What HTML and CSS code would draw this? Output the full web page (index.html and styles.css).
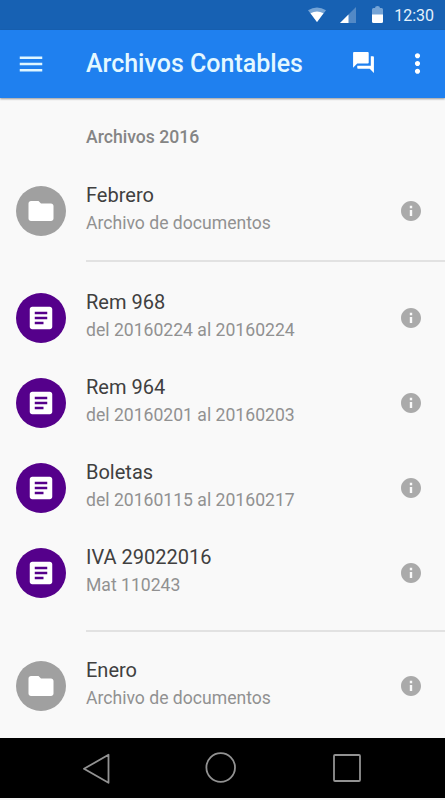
FILE: index.html
```html
<!DOCTYPE html>
<html lang="es">
<head>
    <meta charset="utf-8">
    <title>Archivos Contables</title>
    <link rel="stylesheet" href="styles.css">
</head>
<body>

<svg class="defs" width="0" height="0">
    <symbol id="folder" viewBox="0 0 24 24"><path d="M10 4H4c-1.1 0-2 .9-2 2v12c0 1.1.9 2 2 2h16c1.1 0 2-.9 2-2V8c0-1.1-.9-2-2-2h-8l-2-2z"/></symbol>
    <symbol id="article" viewBox="0 0 24 24"><path d="M19 3H5c-1.1 0-2 .9-2 2v14c0 1.1.9 2 2 2h14c1.1 0 2-.9 2-2V5c0-1.1-.9-2-2-2zm-5 14H7v-2h7v2zm3-4H7v-2h10v2zm0-4H7V7h10v2z"/></symbol>
    <symbol id="info" viewBox="0 0 24 24"><path d="M12 2C6.48 2 2 6.48 2 12s4.48 10 10 10 10-4.48 10-10S17.52 2 12 2zm1.200 15h-2.400v-6h2.400v6zm0-7.800h-2.400V6.800h2.400v2.400z"/></symbol>
</svg>

<div class="statusbar">
    <svg class="wifi" width="18" height="16" viewBox="0 0 18 16">
        <path fill="#75a4d6" d="M0 3.200Q9-2.400 18 3.200L9 15z"/>
        <path fill="#fff" d="M2.500 6.200Q9 2.600 15.500 6.200L9 15z"/>
    </svg>
    <svg class="signal" width="16" height="16" viewBox="0 0 16 16">
        <path fill="#5289c6" d="M0 16L16 0v16z"/>
        <path fill="#fff" d="M0 16l8.500-8.500V16z"/>
    </svg>
    <svg class="battery" width="11" height="17" viewBox="0 0 11 17">
        <path fill="#75a4d6" d="M0 9V3.500Q0 2 1.500 2H3Q3 0 5.500 0T8 2h1.500Q11 2 11 3.500V9z"/>
        <path fill="#fff" d="M0 8.500h11v7q0 1.500-1.500 1.500h-8Q0 17 0 15.500z"/>
    </svg>
    <span class="clock">12:30</span>
</div>

<div class="appbar">
    <svg class="menu" width="30" height="30" viewBox="0 0 24 24"><path d="M3 18h18v-2H3v2zm0-5h18v-2H3v2zm0-7v2h18V6H3z"/></svg>
    <h1 class="title">Archivos Contables</h1>
    <svg class="forum" width="25" height="25" viewBox="0 0 24 24"><path d="M21 6h-2v9H6v2c0 .55.45 1 1 1h11l4 4V7c0-.55-.45-1-1-1zm-4 6V3c0-.55-.45-1-1-1H3c-.55 0-1 .45-1 1v14l4-4h10c.55 0 1-.45 1-1z"/></svg>
    <svg class="more" width="31" height="31" viewBox="0 0 24 24"><path d="M12 8c1.100 0 2-.9 2-2s-.9-2-2-2-2 .9-2 2 .9 2 2 2zm0 2c-1.100 0-2 .9-2 2s.9 2 2 2 2-.9 2-2-.9-2-2-2zm0 6c-1.100 0-2 .9-2 2s.9 2 2 2 2-.9 2-2-.9-2-2-2z"/></svg>
</div>

<div class="content">
    <h2 class="subheader">Archivos 2016</h2>

    <div class="group">
        <div class="row">
            <div class="avatar"><svg><use href="#folder"/></svg></div>
            <div class="text">
                <div class="name">Febrero</div>
                <div class="detail">Archivo de documentos</div>
            </div>
            <svg class="info"><use href="#info"/></svg>
        </div>
    </div>

    <div class="group files">
        <div class="row">
            <div class="avatar file"><svg><use href="#article"/></svg></div>
            <div class="text">
                <div class="name">Rem 968</div>
                <div class="detail">del 20160224 al 20160224</div>
            </div>
            <svg class="info"><use href="#info"/></svg>
        </div>
        <div class="row">
            <div class="avatar file"><svg><use href="#article"/></svg></div>
            <div class="text">
                <div class="name">Rem 964</div>
                <div class="detail">del 20160201 al 20160203</div>
            </div>
            <svg class="info"><use href="#info"/></svg>
        </div>
        <div class="row">
            <div class="avatar file"><svg><use href="#article"/></svg></div>
            <div class="text">
                <div class="name">Boletas</div>
                <div class="detail">del 20160115 al 20160217</div>
            </div>
            <svg class="info"><use href="#info"/></svg>
        </div>
        <div class="row">
            <div class="avatar file"><svg><use href="#article"/></svg></div>
            <div class="text">
                <div class="name">IVA 29022016</div>
                <div class="detail">Mat 110243</div>
            </div>
            <svg class="info"><use href="#info"/></svg>
        </div>
    </div>

    <div class="group last">
        <div class="row">
            <div class="avatar"><svg><use href="#folder"/></svg></div>
            <div class="text">
                <div class="name">Enero</div>
                <div class="detail">Archivo de documentos</div>
            </div>
            <svg class="info"><use href="#info"/></svg>
        </div>
    </div>
</div>

<div class="navbar">
    <svg width="32" height="32" viewBox="0 0 32 32"><path d="M5 16.800L29.500 2.800v28z"/></svg>
    <svg width="32" height="32" viewBox="0 0 32 32"><circle cx="15.700" cy="15.500" r="14.300"/></svg>
    <svg width="32" height="32" viewBox="0 0 32 32"><rect x="3" y="3" width="26" height="26" rx="1"/></svg>
</div>

</body>
</html>
```

FILE: styles.css
```css
* {
    box-sizing: border-box;
}

body {
    margin: 0;
    width: 445px;
    height: 800px;
    overflow: hidden;
    background: #f9f9f9;
    font-family: Roboto, sans-serif;
    display: flex;
    flex-direction: column;
}

svg {
    flex: none;
    display: block;
}

.defs {
    position: absolute;
}

.statusbar {
    height: 30px;
    flex: none;
    display: flex;
    align-items: center;
    justify-content: flex-end;
    padding-right: 11px;
    background: #1761b3;
}

.wifi {
    margin-right: 14px;
}

.signal {
    margin-right: 16px;
}

.battery {
    margin: 0 11px 2px 0;
}

.clock {
    padding-top: 2px;
    color: #e4f1fc;
    font-size: 16px;
    line-height: 30px;
}

.appbar {
    height: 68px;
    flex: none;
    display: flex;
    align-items: center;
    padding: 0 12px 0 16px;
    background: #1f80ef;
    box-shadow: 0 1px 2px rgba(0, 0, 0, 0.4);
    fill: #fff;
}

.menu {
    fill: #dff6ff;
}

.title {
    flex: 1;
    margin: 0 0 0 40px;
    color: #e4f8ff;
    font-size: 25px;
    font-weight: 500;
    line-height: 32px;
    white-space: nowrap;
}

.forum {
    margin: 0 26px 3px 0;
}

.more {
    margin-bottom: 2px;
}

.content {
    flex: 1;
}

.subheader {
    margin: 0;
    padding: 27px 0 0 86px;
    height: 70px;
    color: #858585;
    font-size: 17.6px;
    font-weight: 500;
    line-height: 24px;
}

.group {
    height: 92px;
}

.files {
    height: 370px;
}

/* divider, starts at the text column */
.files::before,
.last::before {
    content: "";
    display: block;
    height: 2px;
    margin: 0 0 13px 86px;
    background: #e2e2e2;
}

.last::before {
    margin-bottom: 11px;
}

.row {
    height: 85px;
    display: flex;
    align-items: center;
    padding: 0 22px 0 16px;
}

.avatar {
    width: 50px;
    height: 50px;
    flex: none;
    display: flex;
    align-items: center;
    justify-content: center;
    border-radius: 50%;
    background: #a0a0a0;
}

.avatar svg {
    width: 30px;
    height: 30px;
    fill: #fff;
}

.file {
    background: #55008b;
}

.text {
    flex: 1;
    margin-left: 20px;
    padding-bottom: 4px;
}

.name {
    color: #404040;
    font-size: 20px;
    line-height: 28px;
}

.detail {
    color: #919191;
    font-size: 17.6px;
    line-height: 28px;
}

.info {
    width: 24px;
    height: 24px;
    fill: #aaa;
}

.navbar {
    height: 62px;
    flex: none;
    display: flex;
    align-items: center;
    gap: 94px;
    padding-left: 79px;
    background: #000;
    border-bottom: 2px solid #f4f4f4;
    fill: none;
    stroke: #929292;
    stroke-width: 1.8;
    stroke-linejoin: round;
}
```
